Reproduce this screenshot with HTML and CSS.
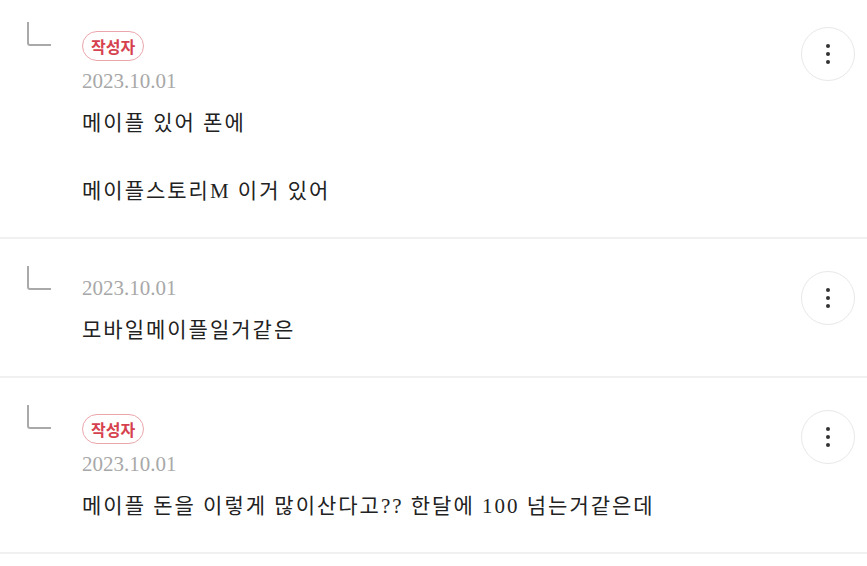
FILE: index.html
```html
<!DOCTYPE html>
<html lang="ko">
<head>
    <meta charset="UTF-8">
    <meta name="viewport" content="width=device-width, initial-scale=1.0">
    <title>댓글</title>
    <link rel="stylesheet" href="styles.css">
</head>
<body>
    <ul class="replies">
        <li class="reply">
            <svg class="reply-mark" width="24" height="24" viewBox="0 0 24 24"><path d="M1 0 V21 Q1 23 3 23 H24" fill="none" stroke="#a9a9a9" stroke-width="2"/></svg>
            <div class="reply-body">
                <span class="badge">작성자</span>
                <div class="date">2023.10.01</div>
                <p class="text">메이플 있어 폰에<br><br>메이플스토리M 이거 있어</p>
            </div>
            <button class="more" aria-label="더보기"><span></span><span></span><span></span></button>
        </li>
        <li class="reply">
            <svg class="reply-mark" width="24" height="24" viewBox="0 0 24 24"><path d="M1 0 V21 Q1 23 3 23 H24" fill="none" stroke="#a9a9a9" stroke-width="2"/></svg>
            <div class="reply-body">
                <div class="date">2023.10.01</div>
                <p class="text">모바일메이플일거같은</p>
            </div>
            <button class="more" aria-label="더보기"><span></span><span></span><span></span></button>
        </li>
        <li class="reply">
            <svg class="reply-mark" width="24" height="24" viewBox="0 0 24 24"><path d="M1 0 V21 Q1 23 3 23 H24" fill="none" stroke="#a9a9a9" stroke-width="2"/></svg>
            <div class="reply-body">
                <span class="badge">작성자</span>
                <div class="date">2023.10.01</div>
                <p class="text">메이플 돈을 이렇게 많이산다고?? 한달에 100 넘는거같은데</p>
            </div>
            <button class="more" aria-label="더보기"><span></span><span></span><span></span></button>
        </li>
    </ul>
</body>
</html>
```

FILE: styles.css
```css
body {
    font-family: "Liberation Serif", "Noto Sans CJK KR", serif;
    background-color: #fff;
    margin: 0;
    padding: 0;
}
.replies {
    list-style: none;
    margin: -5px 0 0 0;
    padding: 0;
}
.reply {
    display: flex;
    align-items: flex-start;
    border-bottom: 2px solid #f0f0f0;
}
.reply-mark {
    flex: none;
    margin: 27px 31px 0 27px;
}
.reply-body {
    flex: 1;
    padding: 36px 0 29px 0;
}
.badge {
    display: inline-block;
    box-sizing: border-box;
    height: 30px;
    line-height: 28px;
    padding: 0 8px;
    margin-bottom: 7px;
    border: 1px solid #eaa6ab;
    border-radius: 15px;
    color: #d6414e;
    font-family: "Noto Sans CJK KR", sans-serif;
    font-size: 16px;
    font-weight: 700;
}
.date {
    font-size: 21px;
    line-height: 26px;
    color: #a8a8a8;
}
.text {
    margin: 12px 0 0 0;
    font-size: 21px;
    line-height: 34px;
    letter-spacing: 2px;
    color: #222;
}
.more {
    flex: none;
    display: flex;
    flex-direction: column;
    align-items: center;
    justify-content: center;
    gap: 4px;
    width: 54px;
    height: 54px;
    margin: 32px 12px 0 0;
    padding: 0;
    border: 1px solid #e8e8e8;
    border-radius: 50%;
    background-color: #fff;
    cursor: pointer;
}
.more span {
    width: 4px;
    height: 4px;
    border-radius: 50%;
    background-color: #333;
}
```
